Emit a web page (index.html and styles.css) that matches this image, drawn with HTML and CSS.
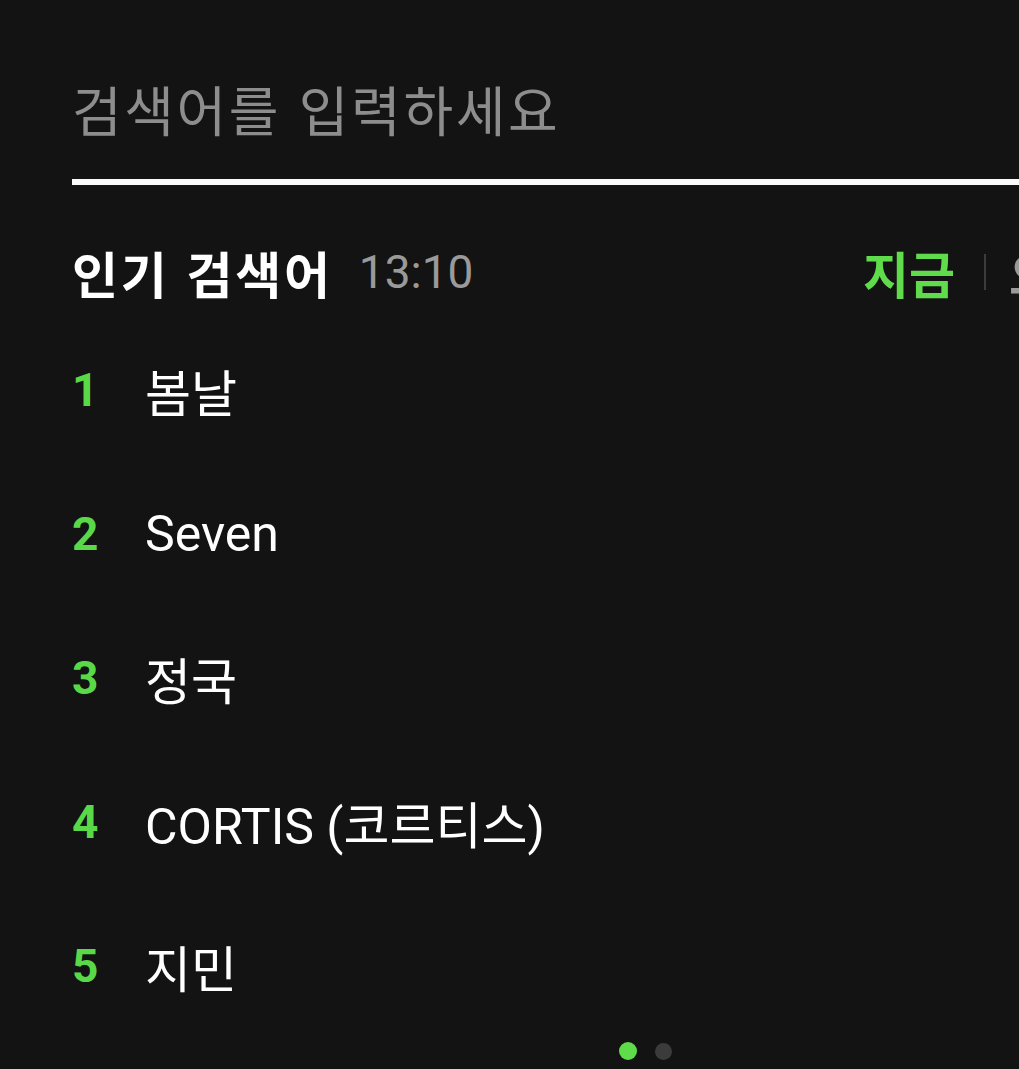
FILE: index.html
```html
<!DOCTYPE html>
<html lang="ko">
<head>
<meta charset="utf-8">
<link rel="stylesheet" href="styles.css">
</head>
<body>
<main class="page">
  <div class="search">
    <div class="placeholder">검색어를 입력하세요</div>
    <div class="underline"></div>
  </div>
  <section class="popular">
    <header class="head">
      <h2 class="title">인기 검색어</h2>
      <span class="time">13:10</span>
      <nav class="tabs">
        <span class="tab active">지금</span>
        <span class="sep"></span>
        <span class="tab">오전</span>
      </nav>
    </header>
    <ol class="list">
      <li class="row"><span class="rank">1</span><span class="kw">봄날</span></li>
      <li class="row"><span class="rank">2</span><span class="kw">Seven</span></li>
      <li class="row"><span class="rank">3</span><span class="kw">정국</span></li>
      <li class="row"><span class="rank">4</span><span class="kw">CORTIS (코르티스)</span></li>
      <li class="row"><span class="rank">5</span><span class="kw">지민</span></li>
    </ol>
    <div class="dots"><span class="dot on"></span><span class="dot"></span></div>
  </section>
</main>
</body>
</html>
```

FILE: styles.css
```css
html, body {
  margin: 0;
  padding: 0;
  background: #131313;
  overflow: hidden;
  width: 1019px;
  height: 1069px;
}
body {
  font-family: Roboto, "Noto Sans CJK KR", sans-serif;
  color: #fff;
}
.page {
  width: 1146px;
  margin-left: 72px;
}
.search {
  padding-top: 78px;
}
.placeholder {
  font-family: "Noto Sans CJK KR", sans-serif;
  font-size: 54px;
  line-height: 62px;
  letter-spacing: 2.6px;
  color: #8d8d8d;
  white-space: nowrap;
}
.underline {
  margin-top: 39px;
  height: 6px;
  background: #fafafa;
}
.head {
  margin-top: 57px;
  height: 60px;
  display: flex;
  align-items: center;
  padding-right: 117px;
}
.title {
  margin: 0;
  font-family: "Noto Sans CJK KR", sans-serif;
  font-weight: 700;
  font-size: 50px;
  line-height: 60px;
  letter-spacing: 2.8px;
  color: #fff;
}
.time {
  margin-left: 26px;
  font-family: Roboto, sans-serif;
  font-size: 46px;
  color: #9a9a9a;
}
.tabs {
  margin-left: auto;
  display: flex;
  align-items: center;
  gap: 29px;
}
.tab {
  font-family: "Noto Sans CJK KR", sans-serif;
  font-weight: 700;
  font-size: 50px;
  line-height: 60px;
  color: #9a9a9a;
}
.tab.active {
  color: #5fdb4b;
}
.sep {
  width: 2px;
  height: 36px;
  margin-right: -6px;
  background: #3c3c3c;
}
.list {
  list-style: none;
  margin: 16px 0 0;
  padding: 0;
}
.row {
  height: 144px;
  display: flex;
  align-items: center;
}
.rank {
  width: 73px;
  font-family: Roboto, sans-serif;
  font-weight: 700;
  font-size: 46px;
  color: #5ad948;
}
.kw {
  font-family: Roboto, "Noto Sans CJK KR", sans-serif;
  font-size: 50px;
  color: #fff;
  white-space: nowrap;
}
.dots {
  margin-top: 4px;
  display: flex;
  justify-content: center;
  align-items: center;
  gap: 18px;
}
.dot {
  width: 17px;
  height: 17px;
  border-radius: 50%;
  background: #3b3b3b;
}
.dot.on {
  width: 18px;
  height: 18px;
  background: #5fdc4a;
}
```
